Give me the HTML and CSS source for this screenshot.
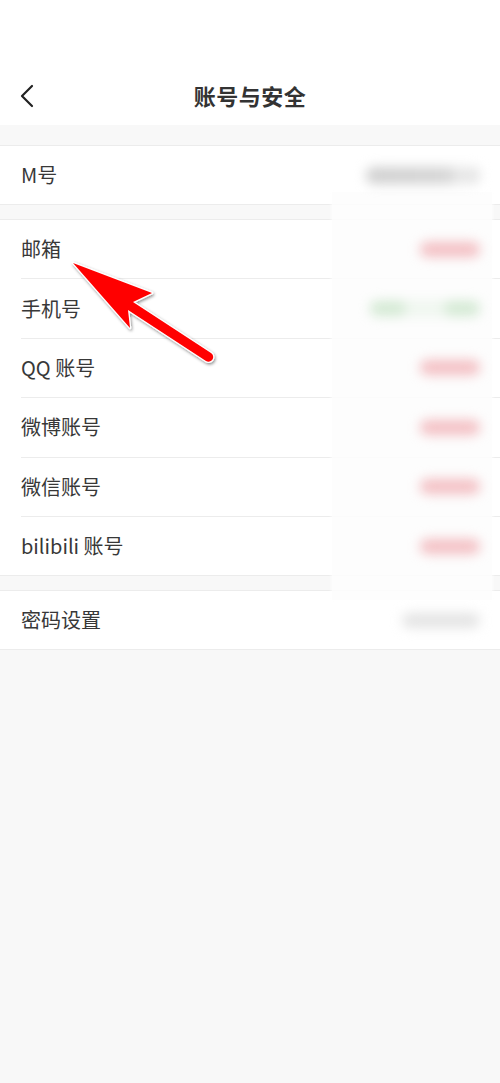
FILE: index.html
```html
<!DOCTYPE html>
<html lang="zh-CN">
<head>
<meta charset="utf-8">
<title>账号与安全</title>
<link rel="stylesheet" href="styles.css">
</head>
<body>
<div class="page">
  <div class="status"></div>
  <header class="nav">
    <svg class="back" viewBox="0 0 14 24" width="14" height="24"><path d="M12 2 L2 12 L12 22" fill="none" stroke="#222" stroke-width="2.2" stroke-linecap="round" stroke-linejoin="round"/></svg>
    <h1 class="title">账号与安全</h1>
  </header>

  <section class="group g1">
    <div class="row"><span class="label">M号</span><span class="val val-gray"></span></div>
  </section>

  <section class="group g2">
    <div class="row"><span class="label">邮箱</span><span class="val val-red"></span></div>
    <div class="row"><span class="label">手机号</span><span class="val val-green"><i></i><i></i></span></div>
    <div class="row"><span class="label">QQ 账号</span><span class="val val-red"></span></div>
    <div class="row"><span class="label">微博账号</span><span class="val val-red"></span></div>
    <div class="row"><span class="label">微信账号</span><span class="val val-red"></span></div>
    <div class="row"><span class="label">bilibili 账号</span><span class="val val-red"></span></div>
  </section>

  <section class="group g3">
    <div class="row"><span class="label">密码设置</span><span class="val val-light"></span></div>
  </section>

  <div class="veil"></div>

  <svg class="arrow" viewBox="60 250 170 120" width="170" height="120">
    <defs>
      <filter id="sh" x="-20%" y="-20%" width="140%" height="140%">
        <feDropShadow dx="1" dy="1.5" stdDeviation="1.5" flood-color="#000" flood-opacity="0.45"/>
      </filter>
    </defs>
    <path filter="url(#sh)" d="M73 263 L152 293 L133 302 L211 353 A4.6 4.6 0 0 1 206 361 L128 310 L130 328 Z" fill="#ff0000" stroke="#fff" stroke-width="2.5" stroke-linejoin="round" paint-order="stroke"/>
  </svg>
</div>
</body>
</html>
```

FILE: styles.css
```css
html, body {
  margin: 0;
  padding: 0;
}
body {
  background: #f8f8f8;
  font-family: "Noto Sans CJK SC", "Noto Sans", sans-serif;
  color: #333;
}
.page {
  position: relative;
  width: 500px;
  min-height: 1083px;
}
.status {
  height: 66px;
  background: #fff;
}
.nav {
  height: 59px;
  background: #fff;
  display: flex;
  align-items: center;
  justify-content: center;
  position: relative;
}
.back {
  position: absolute;
  left: 20px;
  top: 18px;
}
.title {
  margin: 0;
  font-size: 22px;
  font-weight: 700;
  color: #333;
  letter-spacing: 0.5px;
  line-height: 1;
  margin-top: -2px;
}
.group {
  background: #fff;
  border-top: 1px solid #ececec;
  border-bottom: 1px solid #ececec;
}
.g1 { margin-top: 20px; }
.g2 { margin-top: 14px; }
.g3 { margin-top: 14px; }
.row {
  display: flex;
  align-items: center;
  margin-left: 21px;
  padding-right: 20px;
  height: 58px;
}
.g2 .row { height: 58.4px; }
.g2 .row + .row { border-top: 1px solid #ececec; }
.label {
  font-size: 20px;
  color: #383838;
  line-height: 1;
}
.val {
  margin-left: auto;
  position: relative;
  z-index: 2;
  height: 15px;
  border-radius: 8px;
  filter: blur(6px);
}
.val-gray {
  width: 114px;
  height: 17px;
  background: linear-gradient(90deg, #d0d0d0 0%, #d4d4d4 70%, #eaeaea 84%, #e0e0e0 100%);
}
.val-red {
  width: 60px;
  background: #f3bfc3;
}
.val-green {
  width: 110px;
  display: flex;
  justify-content: space-between;
  background: #eef6ee;
}
.val-green i {
  display: block;
  width: 36px;
  height: 15px;
  border-radius: 8px;
  background: #d3e9d3;
}
.val-light {
  width: 78px;
  background: #e4e4e4;
}
.veil {
  position: absolute;
  left: 332px;
  top: 192px;
  width: 160px;
  height: 408px;
  background: rgba(253, 253, 253, 0.88);
  box-shadow: 0 0 3px 1px rgba(253, 253, 253, 0.7);
  z-index: 1;
}
.arrow {
  position: absolute;
  left: 60px;
  top: 250px;
  z-index: 3;
  overflow: visible;
}
```
